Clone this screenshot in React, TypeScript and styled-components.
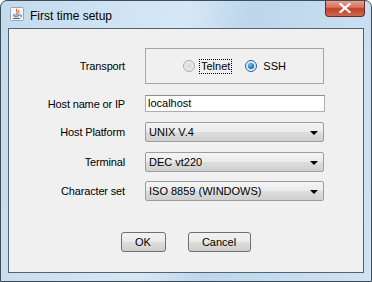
import { FC, Fragment } from "react";
import styled, { createGlobalStyle } from "styled-components";

const GlobalStyle = createGlobalStyle`
    html, body {
        margin: 0;
        padding: 0;
        background: #ffffff;
    }
    * {
        box-sizing: border-box;
    }
`;

const Frame = styled.div`
    width: 372px;
    height: 282px;
    display: flex;
    flex-direction: column;
    border: 1px solid #3f4d59;
    border-radius: 7px 7px 0 0;
    background: linear-gradient(100deg, #c3dbee 0%, #d6e8f6 45%, #bcd6ec 60%, #cfe3f3 100%);
    font-family: "Liberation Sans", Arial, sans-serif;
    font-size: 11px;
    color: #000;
    overflow: hidden;
`;

const TitleBar = styled.div`
    height: 26px;
    display: flex;
    align-items: center;
    padding-left: 9px;
    gap: 6px;
`;

const Title = styled.span`
    font-size: 12px;
    padding-top: 3px;
`;

const CloseButton = styled.div`
    margin-left: auto;
    margin-right: 6px;
    align-self: flex-start;
    width: 40px;
    height: 17px;
    margin-top: -1px;
    border: 1px solid #6b2a22;
    border-top: none;
    border-radius: 0 0 4px 4px;
    background: linear-gradient(180deg, #e9a593 0%, #d7735e 45%, #c1402a 55%, #cf6a4c 100%);
    display: flex;
    align-items: center;
    justify-content: center;
`;

const Client = styled.div`
    flex: 1;
    margin: 1px 7px 8px 7px;
    background: #f0f0f0;
    border: 1px solid #55636f;
    display: flex;
    flex-direction: column;
`;

const Form = styled.div`
    display: grid;
    grid-template-columns: 116px 180px;
    column-gap: 20px;
    align-items: center;
    padding: 19px 0 0 0;
`;

type GapProps = { $gap: number };

const Label = styled.div<GapProps>`
    text-align: right;
    margin-top: ${p => p.$gap}px;
    letter-spacing: -0.15px;
`;

const Cell = styled.div<GapProps>`
    margin-top: ${p => p.$gap}px;
`;

const TransportBox = styled.div`
    height: 36px;
    width: 179px;
    border: 1px solid #a7a7a7;
    display: flex;
    align-items: center;
    justify-content: center;
    gap: 14px;
    padding-left: 1px;
`;

const RadioOption = styled.label`
    display: flex;
    align-items: center;
    gap: 5px;
`;

type RadioProps = { checked: boolean };

const RadioCircle = styled.span<RadioProps>`
    width: 12px;
    height: 12px;
    border-radius: 50%;
    border: 1px solid ${p => (p.checked ? "#2c628b" : "#a9a9a9")};
    background: ${p => (p.checked ? "radial-gradient(circle, #bfe3ff 0%, #e8f3fb 90%)" : "radial-gradient(circle, #d8d8d8 0%, #f4f4f4 90%)")};
    display: flex;
    align-items: center;
    justify-content: center;
`;

const RadioDot = styled.span`
    width: 6px;
    height: 6px;
    border-radius: 50%;
    background: radial-gradient(circle at 40% 35%, #7fc6f5 0%, #1f6fb5 60%, #0d4e8c 100%);
`;

type FocusProps = { focused?: boolean };

const RadioText = styled.span<FocusProps>`
    outline: ${p => (p.focused ? "1px dotted #000" : "none")};
    padding: 0 1px;
    line-height: 13px;
`;

const TextField = styled.div`
    width: 180px;
    height: 17px;
    border: 1px solid #abadb3;
    border-top-color: #8e8f8f;
    background: #fff;
    padding: 1px 2px;
    line-height: 13px;
`;

const Combo = styled.div`
    width: 179px;
    height: 20px;
    border: 1px solid #9d9d9d;
    border-radius: 2px;
    background: linear-gradient(180deg, #f4f4f4 0%, #ebebeb 48%, #dddddd 52%, #cfcfcf 100%);
    display: flex;
    align-items: center;
    padding: 0 5px 0 3px;
`;

const ComboText = styled.span`
    flex: 1;
`;

const Arrow = styled.span`
    width: 0;
    height: 0;
    border-left: 4px solid transparent;
    border-right: 4px solid transparent;
    border-top: 4px solid #000;
    margin-top: 2px;
`;

const ButtonRow = styled.div`
    display: flex;
    justify-content: center;
    gap: 22px;
    margin-top: 31px;
    padding-right: 1px;
`;

type ButtonProps = { $width: number };

const Button = styled.div<ButtonProps>`
    width: ${p => p.$width}px;
    height: 20px;
    border: 1px solid #707070;
    border-radius: 3px;
    background: linear-gradient(180deg, #f2f2f2 0%, #ebebeb 48%, #dddddd 52%, #cfcfcf 100%);
    display: flex;
    align-items: center;
    justify-content: center;
`;

const JavaIcon: FC = () => (
    <svg width="14" height="14" viewBox="0 0 14 14">
        <rect x="0.5" y="0.5" width="13" height="13" rx="1" fill="#f5f5f5" stroke="#9aa6b2" />
        <path d="M7 2 C5 4 9 5 6.5 7" stroke="#e05a1c" strokeWidth="1.2" fill="none" />
        <path d="M9 3 C8 4.5 10 5 8.5 6.5" stroke="#e05a1c" strokeWidth="1" fill="none" />
        <path d="M3 8 H10.5 C12 8 12 10 10.5 10" stroke="#3d6fa8" strokeWidth="1" fill="none" />
        <path d="M3.5 8.5 C4 10.5 8 10.5 9 8.5" stroke="#3d6fa8" strokeWidth="1" fill="none" />
        <path d="M3 11.5 H10" stroke="#3d6fa8" strokeWidth="1" />
    </svg>
);

const CloseGlyph: FC = () => (
    <svg width="12" height="10" viewBox="0 0 12 10">
        <path d="M1.5 1 L10.5 9 M10.5 1 L1.5 9" stroke="#ffffff" strokeWidth="2.2" strokeLinecap="square" />
    </svg>
);

const rows = [
    { label: "Host Platform", value: "UNIX V.4", gap: 10 },
    { label: "Terminal", value: "DEC vt220", gap: 10 },
    { label: "Character set", value: "ISO 8859 (WINDOWS)", gap: 9 },
];

const App: FC = () => {
    return (
        <>
            <GlobalStyle />
            <Frame>
                <TitleBar>
                    <JavaIcon />
                    <Title>First time setup</Title>
                    <CloseButton>
                        <CloseGlyph />
                    </CloseButton>
                </TitleBar>
                <Client>
                    <Form>
                        <Label $gap={0}>Transport</Label>
                        <Cell $gap={0}>
                            <TransportBox>
                                <RadioOption>
                                    <RadioCircle checked={false} />
                                    <RadioText focused>Telnet</RadioText>
                                </RadioOption>
                                <RadioOption>
                                    <RadioCircle checked>
                                        <RadioDot />
                                    </RadioCircle>
                                    <RadioText>SSH</RadioText>
                                </RadioOption>
                            </TransportBox>
                        </Cell>
                        <Label $gap={11}>Host name or IP</Label>
                        <Cell $gap={11}>
                            <TextField>localhost</TextField>
                        </Cell>
                        {rows.map(row => (
                            <Fragment key={row.label}>
                                <Label $gap={row.gap}>{row.label}</Label>
                                <Cell $gap={row.gap}>
                                    <Combo>
                                        <ComboText>{row.value}</ComboText>
                                        <Arrow />
                                    </Combo>
                                </Cell>
                            </Fragment>
                        ))}
                    </Form>
                    <ButtonRow>
                        <Button $width={45}>OK</Button>
                        <Button $width={63}>Cancel</Button>
                    </ButtonRow>
                </Client>
            </Frame>
        </>
    );
};

export default App;
